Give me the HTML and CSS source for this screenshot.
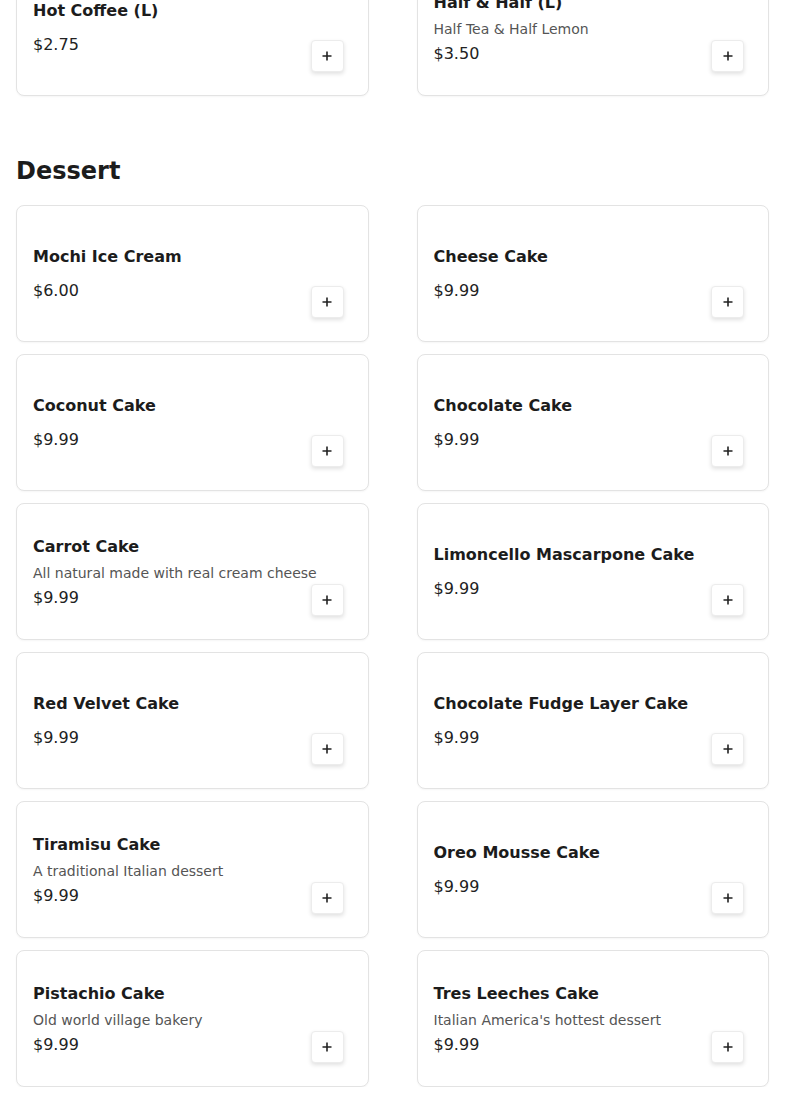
FILE: index.html
```html
<!DOCTYPE html>
<html lang="en">
<head>
<meta charset="utf-8">
<title>Menu</title>
<link rel="stylesheet" href="styles.css">
</head>
<body>
<main class="menu">
  <section class="section section-first">
    <div class="grid">
      <div class="card">
        <div class="info">
          <div class="title">Hot Coffee (L)</div>
          <div class="price">$2.75</div>
        </div>
        <button class="add" aria-label="Add"><svg viewBox="0 0 12 12" width="12" height="12"><path d="M6 1.5v9M1.5 6h9" stroke="#222" stroke-width="1.6" fill="none"/></svg></button>
      </div>
      <div class="card">
        <div class="info info-desc">
          <div class="title">Half &amp; Half (L)</div>
          <div class="desc">Half Tea &amp; Half Lemon</div>
          <div class="price">$3.50</div>
        </div>
        <button class="add" aria-label="Add"><svg viewBox="0 0 12 12" width="12" height="12"><path d="M6 1.5v9M1.5 6h9" stroke="#222" stroke-width="1.6" fill="none"/></svg></button>
      </div>
    </div>
  </section>

  <section class="section">
    <h2 class="heading">Dessert</h2>
    <div class="grid">
      <div class="card">
        <div class="info">
          <div class="title">Mochi Ice Cream</div>
          <div class="price">$6.00</div>
        </div>
        <button class="add" aria-label="Add"><svg viewBox="0 0 12 12" width="12" height="12"><path d="M6 1.5v9M1.5 6h9" stroke="#222" stroke-width="1.6" fill="none"/></svg></button>
      </div>
      <div class="card">
        <div class="info">
          <div class="title">Cheese Cake</div>
          <div class="price">$9.99</div>
        </div>
        <button class="add" aria-label="Add"><svg viewBox="0 0 12 12" width="12" height="12"><path d="M6 1.5v9M1.5 6h9" stroke="#222" stroke-width="1.6" fill="none"/></svg></button>
      </div>
      <div class="card">
        <div class="info">
          <div class="title">Coconut Cake</div>
          <div class="price">$9.99</div>
        </div>
        <button class="add" aria-label="Add"><svg viewBox="0 0 12 12" width="12" height="12"><path d="M6 1.5v9M1.5 6h9" stroke="#222" stroke-width="1.6" fill="none"/></svg></button>
      </div>
      <div class="card">
        <div class="info">
          <div class="title">Chocolate Cake</div>
          <div class="price">$9.99</div>
        </div>
        <button class="add" aria-label="Add"><svg viewBox="0 0 12 12" width="12" height="12"><path d="M6 1.5v9M1.5 6h9" stroke="#222" stroke-width="1.6" fill="none"/></svg></button>
      </div>
      <div class="card">
        <div class="info info-desc">
          <div class="title">Carrot Cake</div>
          <div class="desc">All natural made with real cream cheese</div>
          <div class="price">$9.99</div>
        </div>
        <button class="add" aria-label="Add"><svg viewBox="0 0 12 12" width="12" height="12"><path d="M6 1.5v9M1.5 6h9" stroke="#222" stroke-width="1.6" fill="none"/></svg></button>
      </div>
      <div class="card">
        <div class="info">
          <div class="title">Limoncello Mascarpone Cake</div>
          <div class="price">$9.99</div>
        </div>
        <button class="add" aria-label="Add"><svg viewBox="0 0 12 12" width="12" height="12"><path d="M6 1.5v9M1.5 6h9" stroke="#222" stroke-width="1.6" fill="none"/></svg></button>
      </div>
      <div class="card">
        <div class="info">
          <div class="title">Red Velvet Cake</div>
          <div class="price">$9.99</div>
        </div>
        <button class="add" aria-label="Add"><svg viewBox="0 0 12 12" width="12" height="12"><path d="M6 1.5v9M1.5 6h9" stroke="#222" stroke-width="1.6" fill="none"/></svg></button>
      </div>
      <div class="card">
        <div class="info">
          <div class="title">Chocolate Fudge Layer Cake</div>
          <div class="price">$9.99</div>
        </div>
        <button class="add" aria-label="Add"><svg viewBox="0 0 12 12" width="12" height="12"><path d="M6 1.5v9M1.5 6h9" stroke="#222" stroke-width="1.6" fill="none"/></svg></button>
      </div>
      <div class="card">
        <div class="info info-desc">
          <div class="title">Tiramisu Cake</div>
          <div class="desc">A traditional Italian dessert</div>
          <div class="price">$9.99</div>
        </div>
        <button class="add" aria-label="Add"><svg viewBox="0 0 12 12" width="12" height="12"><path d="M6 1.5v9M1.5 6h9" stroke="#222" stroke-width="1.6" fill="none"/></svg></button>
      </div>
      <div class="card">
        <div class="info">
          <div class="title">Oreo Mousse Cake</div>
          <div class="price">$9.99</div>
        </div>
        <button class="add" aria-label="Add"><svg viewBox="0 0 12 12" width="12" height="12"><path d="M6 1.5v9M1.5 6h9" stroke="#222" stroke-width="1.6" fill="none"/></svg></button>
      </div>
      <div class="card">
        <div class="info info-desc">
          <div class="title">Pistachio Cake</div>
          <div class="desc">Old world village bakery</div>
          <div class="price">$9.99</div>
        </div>
        <button class="add" aria-label="Add"><svg viewBox="0 0 12 12" width="12" height="12"><path d="M6 1.5v9M1.5 6h9" stroke="#222" stroke-width="1.6" fill="none"/></svg></button>
      </div>
      <div class="card">
        <div class="info info-desc">
          <div class="title">Tres Leeches Cake</div>
          <div class="desc">Italian America's hottest dessert</div>
          <div class="price">$9.99</div>
        </div>
        <button class="add" aria-label="Add"><svg viewBox="0 0 12 12" width="12" height="12"><path d="M6 1.5v9M1.5 6h9" stroke="#222" stroke-width="1.6" fill="none"/></svg></button>
      </div>
    </div>
  </section>
</main>
</body>
</html>
```

FILE: styles.css
```css
* { box-sizing: border-box; }

html, body {
  margin: 0;
  padding: 0;
  background: #ffffff;
  font-family: "DejaVu Sans", "Noto Sans", sans-serif;
  color: #1c1c1c;
  overflow: hidden;
}

.menu {
  padding: 0 16px;
}

.section-first {
  margin-top: -41px;
}

.heading {
  margin: 61px 0 19px;
  font-size: 24px;
  line-height: 29px;
  font-weight: 700;
  color: #1c1c1c;
}

.grid {
  display: grid;
  grid-template-columns: 1fr 1fr;
  column-gap: 48px;
  row-gap: 12px;
}

.card {
  position: relative;
  height: 137px;
  display: flex;
  padding: 16px;
  border: 1px solid #e3e3e3;
  border-radius: 8px;
  background: #fff;
  box-shadow: 0 1px 2px rgba(0, 0, 0, 0.04);
}

.info {
  flex: 1;
  display: flex;
  flex-direction: column;
  justify-content: center;
  min-width: 0;
}

.info-desc {
  padding-top: 2px;
}

.title {
  font-size: 16px;
  line-height: 24px;
  font-weight: 700;
  color: #1c1c1c;
  margin-bottom: 4px;
}

.title + .price {
  margin-top: 6px;
}

.desc {
  font-size: 14px;
  line-height: 20px;
  color: #555555;
  margin-bottom: 3px;
  white-space: nowrap;
}

.price {
  font-size: 16px;
  line-height: 24px;
  color: #222222;
}

.add {
  position: absolute;
  right: 24px;
  bottom: 23px;
  width: 33px;
  height: 32px;
  padding: 0;
  display: flex;
  align-items: center;
  justify-content: center;
  background: #fff;
  border: 1px solid #ececec;
  border-radius: 4px;
  box-shadow: 0 2px 4px rgba(0, 0, 0, 0.12);
  cursor: pointer;
}

.add svg {
  display: block;
}
```
